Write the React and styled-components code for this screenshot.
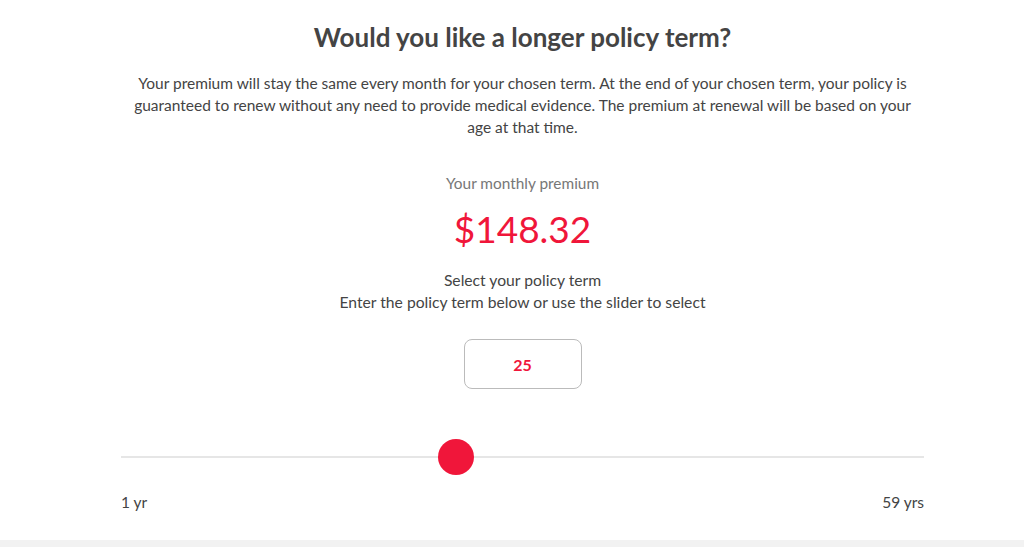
import React, { useState } from 'react'
import styled, { createGlobalStyle } from 'styled-components'

const GlobalStyle = createGlobalStyle`
    html, body {
        margin: 0;
        padding: 0;
        background: #fff;
        font-family: Lato, "Open Sans", sans-serif;
        color: #444;
    }
`;

const Page = styled.div`
    min-height: 547px;
    display: flex;
    flex-direction: column;
`;

const Main = styled.main`
    margin: 0 100px 0 121px;
    padding-top: 20px;
    display: flex;
    flex-direction: column;
    align-items: center;
    text-align: center;
`;

const Title = styled.h1`
    font-size: 26px;
    font-weight: 700;
    color: #444;
    margin: 0 0 18px;
    line-height: 34px;
`;

const Intro = styled.p`
    font-size: 15.5px;
    line-height: 22px;
    margin: 0 0 34px;
`;

const Muted = styled.p`
    font-size: 15.4px;
    color: #777;
    margin: 0;
    line-height: 22px;
`;

const Price = styled.div`
    font-size: 37px;
    color: #f0163a;
    margin: 12px 0 17px;
    line-height: 46px;
`;

const Line = styled.p`
    font-size: 15.7px;
    margin: 0;
    line-height: 22px;
`;

const TermInput = styled.input`
    box-sizing: border-box;
    width: 118px;
    height: 50px;
    margin-top: 26px;
    border: 1px solid #bbb;
    border-radius: 8px;
    text-align: center;
    font-family: Lato, sans-serif;
    font-size: 16px;
    font-weight: 700;
    color: #f0163a;
    outline: none;
`;

const SliderBlock = styled.div`
    width: 100%;
    margin-top: 50px;
`;

const Range = styled.input`
    -webkit-appearance: none;
    appearance: none;
    display: block;
    width: 100%;
    height: 36px;
    margin: 0;
    background: transparent;

    &::-webkit-slider-runnable-track {
        height: 2px;
        background: #e6e6e6;
    }
    &::-webkit-slider-thumb {
        -webkit-appearance: none;
        width: 36px;
        height: 36px;
        border-radius: 50%;
        background: #f0163a;
        border: none;
        margin-top: -17px;
        cursor: pointer;
    }
    &::-moz-range-track {
        height: 2px;
        background: #e6e6e6;
    }
    &::-moz-range-thumb {
        width: 36px;
        height: 36px;
        border-radius: 50%;
        background: #f0163a;
        border: none;
    }
`;

const Ends = styled.div`
    display: flex;
    justify-content: space-between;
    font-size: 15.5px;
    margin-top: 18px;
`;

const Footer = styled.div`
    margin-top: auto;
    height: 7px;
    background: #f2f2f2;
`;

const App = () => {
    const [term, setTerm] = useState(25);

    return (
        <Page>
            <GlobalStyle />
            <Main>
                <Title>Would you like a longer policy term?</Title>
                <Intro>
                    Your premium will stay the same every month for your chosen term. At the end of your chosen term, your policy is guaranteed to renew without any need to provide medical evidence. The premium at renewal will be based on your age at that time.
                </Intro>
                <Muted>Your monthly premium</Muted>
                <Price>$148.32</Price>
                <Line>Select your policy term</Line>
                <Line>Enter the policy term below or use the slider to select</Line>
                <TermInput value={term} onChange={e => setTerm(e.target.value)} />
                <SliderBlock>
                    <Range type="range" min={1} max={59} value={term} onChange={e => setTerm(e.target.value)} />
                    <Ends>
                        <span>1 yr</span>
                        <span>59 yrs</span>
                    </Ends>
                </SliderBlock>
            </Main>
            <Footer />
        </Page>
    );
}

export default App;
